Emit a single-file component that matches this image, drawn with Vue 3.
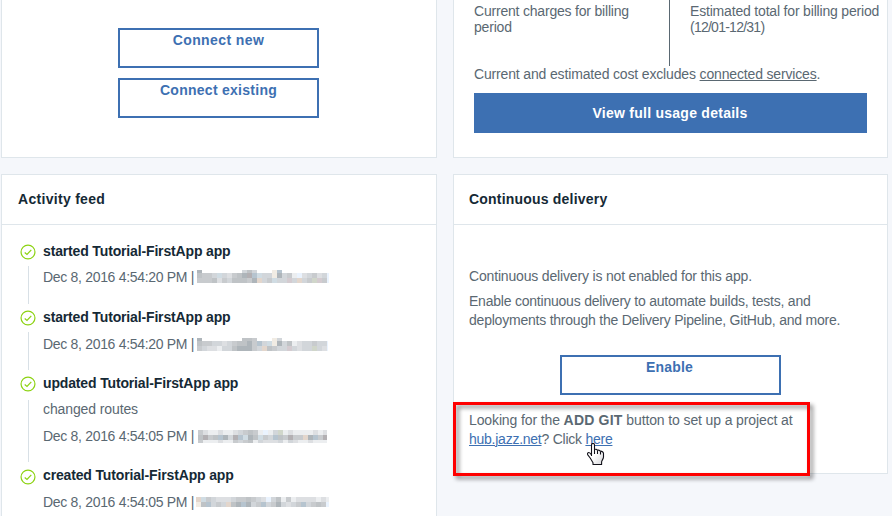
<script setup>
const palette = {
  '.': 'transparent',
  a: '#eceef0',
  b: '#dddfe2',
  c: '#d2d6da',
  d: '#c8cbce',
  e: '#bfc3c6',
  f: '#aeb5ba',
  g: '#b3b0b3',
  h: '#d0dce3',
  i: '#b6c4cf',
  j: '#f1ece4',
  k: '#e3d6cc',
  l: '#eaf3fe',
  m: '#d0d6ca',
  n: '#d4cbd0',
}

const mask = (left, width, rows, heights) => {
  const cells = []
  let y = 0
  rows.forEach((row, r) => {
    for (let x = 0; x < row.length; x++) {
      cells.push({ x: x * 5, y, h: heights[r], fill: palette[row[x]] })
    }
    y += heights[r]
  })
  return { left, width, height: y, cells }
}

const items = [
  {
    title: 'started Tutorial-FirstApp app',
    time: 'Dec 8, 2016 4:54:20 PM',
    kind: 'first',
    user: mask('near', 132, [
      'f........cec...ji..........',
      'eddchcbdefgihccjfcdalbcdbcl',
      'dddebdceeedfkcdhccnckcdmndl',
    ], [3, 5, 5]),
  },
  {
    title: 'started Tutorial-FirstApp app',
    time: 'Dec 8, 2016 4:54:20 PM',
    kind: 'second',
    user: mask('near', 131, [
      'f........eed...jc..........',
      'eddccbcdeefdichjfceabccdccl',
      'dcbbaccefffdckedccncbccmcbl',
    ], [3, 5, 5]),
  },
  {
    title: 'updated Tutorial-FirstApp app',
    detail: 'changed routes',
    time: 'Dec 8, 2016 4:54:05 PM',
    kind: 'third',
    user: mask('mid', 129, [
      'dbaabaabcdedalacmabaaaabab',
      'egdeifcgihfehdciedgddkfidg',
      'daaabaadcdeacbbbcacbaabaaa',
    ], [5, 5, 3]),
  },
  {
    title: 'created Tutorial-FirstApp app',
    time: 'Dec 8, 2016 4:54:05 PM',
    kind: 'fourth',
    user: mask('far', 133, [
      'khdcbbbcddedcblceadabbbbaba',
      'jeicdckefifcdicdfcbcdicdedl',
    ], [5, 5]),
  },
]
</script>

<template>
  <main class="page">
    <div class="column left">
      <section class="card connections">
        <button class="btn outline">Connect new</button>
        <button class="btn outline existing">Connect existing</button>
      </section>

      <section class="card activity">
        <header class="card-header act-title">Activity feed</header>
        <ul class="feed">
          <li v-for="(item, n) in items" :key="n" :class="['item', item.kind]">
            <div class="rail">
              <svg class="check" width="16" height="16" viewBox="0 0 16 16">
                <circle cx="8" cy="8" r="6.95" />
                <path d="M4.7 8.5 7 10.5 11.3 5.8" />
              </svg>
              <span v-if="n < items.length - 1" class="line"></span>
            </div>
            <div class="entry">
              <h3>{{ item.title }}</h3>
              <p v-if="item.detail" class="detail">{{ item.detail }}</p>
              <p class="meta">
                <span class="time">{{ item.time }} |</span>
                <svg
                  :class="['user', item.user.left]"
                  :width="item.user.width"
                  :height="item.user.height"
                  shape-rendering="crispEdges"
                >
                  <rect
                    v-for="(cell, k) in item.user.cells"
                    :key="k"
                    :x="cell.x"
                    :y="cell.y"
                    width="5"
                    :height="cell.h"
                    :fill="cell.fill"
                  />
                </svg>
              </p>
            </div>
          </li>
        </ul>
      </section>
    </div>

    <div class="column right">
      <section class="card usage">
        <div class="costs">
          <div class="cost current">Current charges for billing<br />period</div>
          <div class="cost estimated">Estimated total for billing period<br /><span class="dates">(12/01-12/31)</span></div>
        </div>
        <p class="note">Current and estimated cost excludes <a>connected services</a>.</p>
        <button class="btn solid">View full usage details</button>
      </section>

      <section class="card delivery">
        <header class="card-header">Continuous delivery</header>
        <div class="delivery-body">
          <p class="status">Continuous delivery is not enabled for this app.</p>
          <p class="about">Enable continuous delivery to automate builds, tests, and<br />deployments through the Delivery Pipeline, GitHub, and more.</p>
          <button class="btn outline enable">Enable</button>
          <p class="git">Looking for the <b>ADD GIT</b> button to set up a project at<br /><span class="links"><a>hub.jazz.net</a>? Click <a>here</a></span></p>
        </div>
        <div class="highlight"></div>
        <svg class="pointer" width="18" height="23" viewBox="0 0 18 23">
          <defs>
            <linearGradient id="hand" x1="0" y1="0" x2="1" y2="1">
              <stop offset=".5" stop-color="#fff" />
              <stop offset="1" stop-color="#d4d4d8" />
            </linearGradient>
          </defs>
          <path
            fill="url(#hand)"
            d="M4.5 13V1.9C4.5 1 5.1.5 6 .5s1.5.6 1.5 1.4v4.6c1.3-.4 2.6-.1 2.9.8 1.2-.4 2.4 0 2.7.9 1.8-.3 3.4.8 3.4 2.4V14c0 2-1.9 3.5-1.9 5v2.5H6v-1.8L3.2 15 .8 11.8c-.7-1.2 0-2.3 1-2.3 1.1 0 1.9 1.2 2.7 2.6"
          />
          <path fill="none" d="M7.5 6.5V11M10.5 7.5V11M13.5 8.5V11.5" />
        </svg>
      </section>
    </div>
  </main>
</template>

<style>
body {
  background: #f5f7fb;
  overflow: hidden;
}
</style>

<style scoped>
.page {
  display: grid;
  grid-template-columns: 436px 435px;
  column-gap: 16px;
  box-sizing: border-box;
  height: 516px;
  padding-left: 1px;
  overflow: hidden;
  background: #f5f7fb;
  color: #5a6872;
  font: 14px/20px "Liberation Sans", Arial, sans-serif;
  letter-spacing: -0.2px;
  white-space: nowrap;
}

p, h3, ul {
  margin: 0;
  padding: 0;
}

.column {
  display: flex;
  flex-direction: column;
  gap: 16px;
  min-width: 0;
}

.card {
  box-sizing: border-box;
  flex: none;
  background: #fff;
  border: 1px solid #dfe6eb;
}

.connections,
.usage {
  height: 158px;
  border-top: 0;
}

.connections {
  display: flex;
  flex-direction: column;
  align-items: flex-start;
  gap: 10px;
  padding: 28px 0 0 116px;
}

.btn {
  box-sizing: border-box;
  display: block;
  height: 40px;
  margin: 0;
  padding: 0;
  border: 2px solid #3d70b2;
  border-radius: 0;
  font: bold 14px/20px "Liberation Sans", Arial, sans-serif;
  letter-spacing: 0.42px;
}

.outline {
  width: 201px;
  padding-bottom: 16px;
  background: #fff;
  color: #3d70b2;
}

.existing {
  letter-spacing: 0.27px;
}

.solid {
  width: 393px;
  padding-right: 1px;
  background: #3d70b2;
  color: #fff;
  letter-spacing: 0.26px;
}

.activity {
  height: 400px;
}

.card-header {
  box-sizing: border-box;
  height: 50px;
  padding: 14px 15px 15px;
  border-bottom: 1px solid #dfe6eb;
  color: #152935;
  font-weight: bold;
  letter-spacing: 0.2px;
}

.act-title {
  padding-left: 16px;
  letter-spacing: 0.3px;
}

.feed {
  padding: 16px 0 0 18px;
  list-style: none;
}

.item {
  display: flex;
  height: 66px;
}

.item.third {
  height: 92px;
}

.rail {
  display: flex;
  flex-direction: column;
  align-items: center;
  width: 16px;
  margin-right: 7px;
  padding: 3px 0;
  box-sizing: border-box;
}

.fourth .rail {
  padding-top: 4px;
}

.check {
  flex: none;
  fill: none;
  stroke: #8cd211;
  stroke-width: 1.2;
}

.line {
  flex: 1;
  width: 1px;
  margin-top: 6px;
  background: #d8e0e6;
}

.third .line {
  margin-top: 8px;
}

.entry {
  display: flex;
  flex-direction: column;
}

h3 {
  color: #152935;
  font-size: 14px;
  line-height: 20px;
  letter-spacing: -0.15px;
}

.detail {
  margin-top: 6px;
  letter-spacing: -0.11px;
}

.meta {
  display: flex;
  margin-top: 7px;
  height: 20px;
  letter-spacing: -0.31px;
}

.first .meta {
  margin-top: 6px;
}

.time {
  width: 154px;
}

.user {
  flex: none;
  margin-top: 4px;
}

.first .user {
  margin-top: 3px;
}

.mid {
  margin-left: 1px;
}

.far {
  margin-left: -1px;
  margin-top: 5px;
}

.usage {
  padding-left: 20px;
}

.costs {
  display: flex;
  height: 66px;
  line-height: 16px;
}

.cost {
  padding-top: 3px;
}

.current {
  box-sizing: border-box;
  width: 196px;
  border-right: 1px solid #5a6872;
}

.estimated {
  padding-left: 20px;
  letter-spacing: -0.18px;
}

.dates {
  letter-spacing: -0.75px;
}

.note {
  margin-bottom: 11px;
  line-height: 16px;
  letter-spacing: -0.155px;
}

a {
  text-decoration: underline;
  text-underline-offset: 1px;
  text-decoration-thickness: 1px;
}

.delivery {
  position: relative;
  height: 300px;
}

.delivery-body {
  padding: 41px 15px 0;
}

.status {
  letter-spacing: -0.17px;
}

.about {
  margin-top: 6px;
  line-height: 19px;
  letter-spacing: -0.22px;
}

.enable {
  width: 221px;
  margin: 25px 0 16px 91px;
  padding-right: 2px;
  letter-spacing: 0.2px;
}

.git {
  line-height: 19px;
  letter-spacing: -0.12px;
}

.git b {
  letter-spacing: 0.2px;
}

.links {
  letter-spacing: -0.25px;
}

.git a {
  color: #3d70b2;
}

.highlight {
  position: absolute;
  top: 227px;
  left: -1px;
  box-sizing: border-box;
  width: 357px;
  height: 74px;
  border: 3px solid #fe0000;
  filter: drop-shadow(3px 3px 2px rgba(0, 0, 0, 0.45));
}

.pointer {
  position: absolute;
  top: 268px;
  left: 133px;
  stroke: #101018;
  stroke-width: 1.1;
  stroke-linejoin: round;
}
</style>
